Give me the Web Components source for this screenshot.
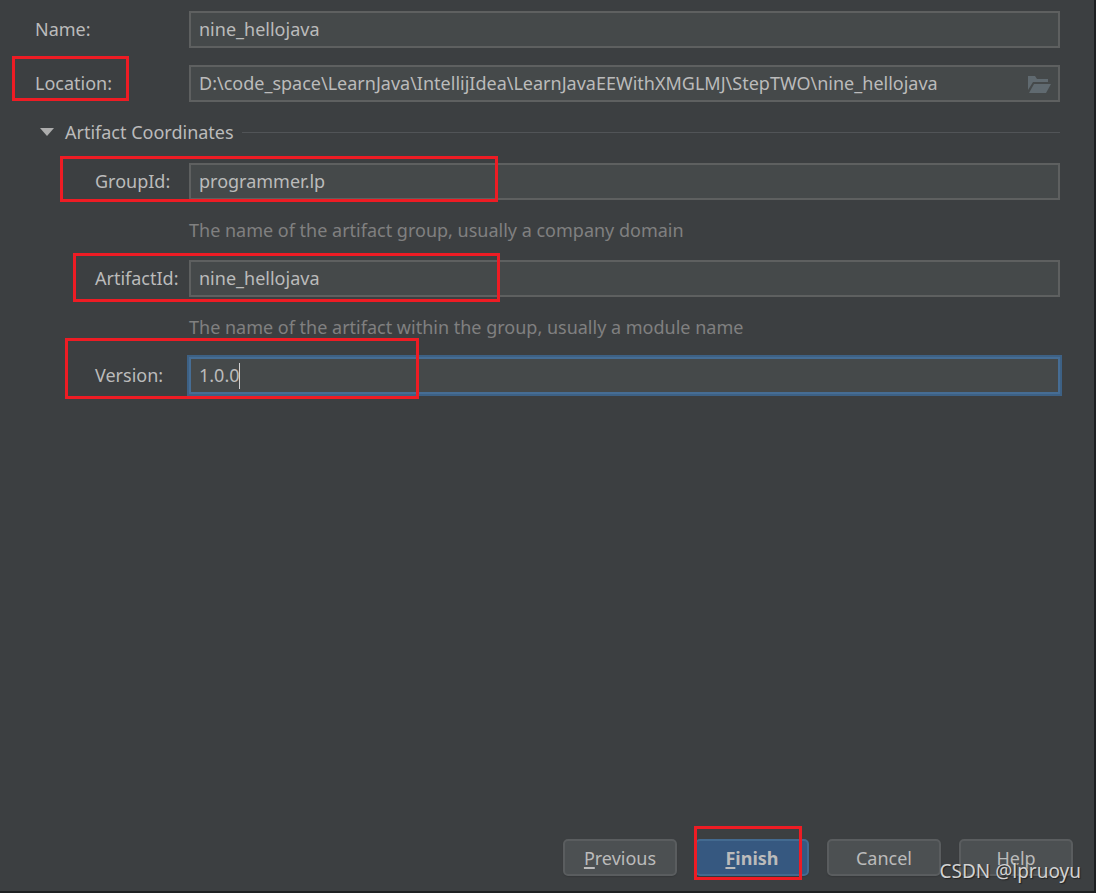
<!DOCTYPE html>
<html lang="en">
<head>
<meta charset="utf-8">
<title>New Project</title>
<style>
  html, body { margin: 0; height: 100%; }
  body { background: #1e2022; color: #bbbbbb; font: 18px/24px "Noto Sans", "Open Sans", sans-serif; }
</style>
</head>
<body>
<project-wizard>
  <form-field label="Name:" value="nine_hellojava"></form-field>
  <form-field label="Location:" value="D:\code_space\LearnJava\IntellijIdea\LearnJavaEEWithXMGLMJ\StepTWO\nine_hellojava">
    <browse-button slot="trailing"></browse-button>
    <red-mark slot="mark" style="--x:-23px;--y:-9px;--w:117px;--h:45px"></red-mark>
  </form-field>
  <field-section heading="Artifact Coordinates">
    <form-field label="GroupId:" value="programmer.lp" hint="The name of the artifact group, usually a company domain">
      <red-mark slot="mark" style="--x:-35px;--y:-7px;--w:438px;--h:46px"></red-mark>
    </form-field>
    <form-field label="ArtifactId:" value="nine_hellojava" hint="The name of the artifact within the group, usually a module name">
      <red-mark slot="mark" style="--x:-22px;--y:-7px;--w:427px;--h:49px"></red-mark>
    </form-field>
    <form-field label="Version:" value="1.0.0" active>
      <red-mark slot="mark" style="--x:-30px;--y:-19px;--w:354px;--h:61px"></red-mark>
    </form-field>
  </field-section>
  <wizard-button slot="actions"><u>P</u>revious</wizard-button>
  <wizard-button slot="actions" primary><u>F</u>inish
    <red-mark slot="mark" style="--x:-1px;--y:-13px;--w:108px;--h:54px"></red-mark>
  </wizard-button>
  <wizard-button slot="actions">Cancel</wizard-button>
  <wizard-button slot="actions">Help</wizard-button>
  <page-credit slot="credit">CSDN @lpruoyu</page-credit>
</project-wizard>

<script>
  class Base extends HTMLElement {
    constructor() { super(); this.attachShadow({ mode: 'open' }); }
    connectedCallback() { this.shadowRoot.innerHTML = this.render(); }
  }

  customElements.define('project-wizard', class extends Base {
    render() { return `
      <style>
        :host { display: block; height: 100%; box-sizing: border-box; padding: 0 2px 2px 0; }
        main { position: relative; display: flex; flex-direction: column; min-height: 100%; box-sizing: border-box;
               padding: 11px 21px 15px 35px; background: #3c3f41; }
        form { display: flex; flex-direction: column; gap: 17px; flex: 1; padding-right: 13px; }
        footer { display: flex; justify-content: flex-end; gap: 18px; }
      </style>
      <main>
        <form><slot></slot></form>
        <footer><slot name="actions"></slot></footer>
        <slot name="credit"></slot>
      </main>`; }
  });

  customElements.define('form-field', class extends Base {
    render() {
      const hint = this.getAttribute('hint');
      return `
      <style>
        :host { display: block; position: relative; }
        .row { display: grid; grid-template-columns: var(--label-width, 154px) minmax(0, 1fr); align-items: center; }
        label { padding-bottom: 2px; }
        .box { position: relative; display: flex; align-items: center; box-sizing: border-box; height: 37px;
               background: #45494a; border: 2px solid #5e6060; }
        input { flex: 1; min-width: 0; height: 33px; box-sizing: border-box; padding: 0 8px 2px; border: 0; outline: 0;
                background: none; color: inherit; font: inherit; }
        .hint { grid-column: 2; margin: 0; line-height: 60px; color: #808080; }
        :host([active]) .box { border-color: #466d94; box-shadow: 0 0 0 2px #3d6185; }
        .caret { position: absolute; left: 48px; top: 4px; width: 1px; height: 26px; background: #d0d0d0; }
      </style>
      <div class="row">
        <label for="field">${this.getAttribute('label')}</label>
        <div class="box">
          <input id="field" type="text" value="${this.getAttribute('value')}">
          <slot name="trailing"></slot>
          ${this.hasAttribute('active') ? '<span class="caret"></span>' : ''}
        </div>
        ${hint ? `<p class="hint">${hint}</p>` : ''}
      </div>
      <slot name="mark"></slot>`; }
  });

  customElements.define('browse-button', class extends Base {
    render() { return `
      <style>
        :host { display: block; }
        button { display: flex; margin: 0 7px 0 0; padding: 0; border: 0; background: none; }
      </style>
      <button type="button" aria-label="Browse">
        <svg width="24" height="18" viewBox="0 0 24 18" fill="#606a70">
          <path d="M1 1h7l2 3h11v3H6L1 15z"/>
          <path d="M7 9h17l-5 9H2z"/>
        </svg>
      </button>`; }
  });

  customElements.define('field-section', class extends Base {
    render() { return `
      <style>
        :host { display: block; }
        h2 { display: flex; align-items: center; gap: 8px; margin: 1px 0 19px; padding-left: 5px;
             font: inherit; line-height: 24px; }
        h2 svg { margin-right: 3px; }
        h2::after { content: ""; flex: 1; height: 1px; background: #515457; }
        .fields { --label-width: 94px; padding-left: 60px; }
      </style>
      <section>
        <h2><svg width="14" height="8" viewBox="0 0 14 8" fill="#adadad"><path d="M0 0h14L7 8z"/></svg>${this.getAttribute('heading')}</h2>
        <div class="fields"><slot></slot></div>
      </section>`; }
  });

  customElements.define('wizard-button', class extends Base {
    render() { return `
      <style>
        :host { display: block; position: relative; }
        button { width: 114px; height: 37px; box-sizing: border-box; padding: 0; border: 2px solid #5a5d5f; border-radius: 5px;
                 background: #4c5052; color: inherit; font: inherit; box-shadow: 0 1px 1px #35383a; display: block; }
        :host([primary]) button { background: #365880; border-color: #436a90; font-weight: 700; }
        ::slotted(u) { text-decoration-thickness: 2px; text-underline-offset: 2px; }
      </style>
      <button type="button"><slot></slot></button>
      <slot name="mark"></slot>`; }
  });

  customElements.define('red-mark', class extends Base {
    render() { return `
      <style>
        :host { position: absolute; left: var(--x); top: var(--y); width: var(--w); height: var(--h);
                box-sizing: border-box; border: 3px solid #ee1c24; pointer-events: none; z-index: 1; }
      </style>`; }
  });

  customElements.define('page-credit', class extends Base {
    render() { return `
      <style>
        :host { position: absolute; right: 13px; bottom: 8px; z-index: 2; font-size: 19px; line-height: 24px;
                color: #d2d2d2; text-shadow: 1px 1px 1px #222; white-space: nowrap; }
      </style>
      <slot></slot>`; }
  });
</script>
</body>
</html>
